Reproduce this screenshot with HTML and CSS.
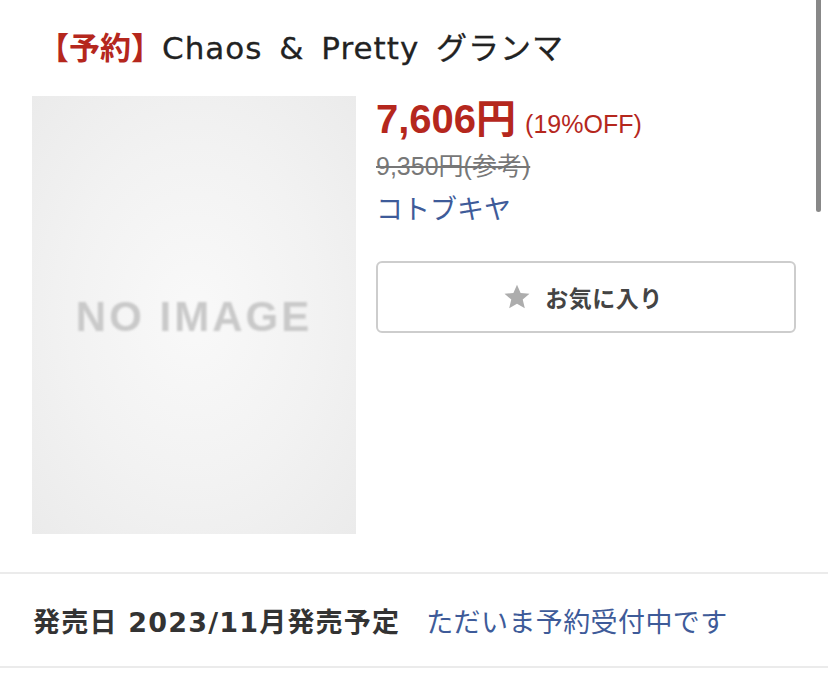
FILE: index.html
```html
<!DOCTYPE html>
<html lang="ja">
<head>
  <meta charset="UTF-8">
  <meta name="viewport" content="width=device-width, initial-scale=1.0">
  <title>【予約】Chaos &amp; Pretty グランマ</title>
  <link rel="stylesheet" href="styles.css">
</head>
<body>
  <div class="page">
    <h1 class="item-title"><span class="tag">【予約】</span>Chaos &amp; Pretty グランマ</h1>

    <div class="summary">
      <div class="thumb">
        <span class="no-image">NO IMAGE</span>
      </div>

      <div class="info">
        <div class="price">
          <span class="price-now">7,606円</span>
          <span class="price-off">(19%OFF)</span>
        </div>
        <div class="price-ref">9,350円(参考)</div>
        <a class="maker" href="#">コトブキヤ</a>

        <button class="btn-fav" type="button">
          <svg class="star" viewBox="0 0 24 24" width="28" height="28" aria-hidden="true">
            <path d="M12 1.5l3.1 7.1 7.6.6-5.8 5 1.8 7.5L12 17.7l-6.7 4 1.8-7.5-5.8-5 7.6-.6z" fill="#adadad"/>
          </svg>
          <span>お気に入り</span>
        </button>
      </div>
    </div>
  </div>

  <div class="release">
    <span class="release-date">発売日 2023/11月発売予定</span>
    <span class="release-status">ただいま予約受付中です</span>
  </div>

  <!-- scroll indicator -->
  <div class="scroll-bar"></div>
</body>
</html>
```

FILE: styles.css
```css
/* General Styles */
* {
  margin: 0;
  padding: 0;
  box-sizing: border-box;
}

body {
  font-family: "DejaVu Sans", "Noto Sans CJK JP", sans-serif;
  background-color: #fff;
  color: #222;
}

.page {
  padding: 0 32px;
}

.item-title {
  font-size: 31px;
  font-weight: 400;
  line-height: 42px;
  letter-spacing: 1px;
  word-spacing: 6px;
  padding: 27px 0 0 6px;
  color: #222;
  -webkit-text-stroke: 0.3px #222;
}

.item-title .tag {
  color: #b5271d;
  font-weight: 700;
  letter-spacing: 0;
  -webkit-text-stroke: 0;
}

.summary {
  display: flex;
  gap: 20px;
  margin-top: 27px;
}

.thumb {
  flex: 0 0 324px;
  height: 438px;
  background: radial-gradient(ellipse at 50% 50%, #f9f9f9 0%, #f2f2f2 55%, #ebebeb 100%);
  display: flex;
  align-items: center;
  justify-content: center;
}

.no-image {
  font-family: "Liberation Sans", Arial, sans-serif;
  font-weight: 700;
  font-size: 42px;
  letter-spacing: 3px;
  color: #c9c9c9;
  filter: blur(0.8px);
  margin-top: 3px;
}

.info {
  flex: 1;
  display: flex;
  flex-direction: column;
  align-items: flex-start;
}

.price {
  display: flex;
  align-items: baseline;
  gap: 9px;
  font-family: "Liberation Sans", "Noto Sans CJK JP", sans-serif;
  color: #b5271d;
  line-height: 46px;
}

.price-now {
  font-size: 40px;
  font-weight: 700;
}

.price-off {
  font-size: 25px;
}

.price-ref {
  font-family: "Liberation Sans", "Noto Sans CJK JP", sans-serif;
  font-size: 25px;
  line-height: 34px;
  color: #777;
  text-decoration: line-through;
  margin-top: 2px;
}

.maker {
  font-family: "Noto Sans CJK JP", sans-serif;
  font-size: 27px;
  line-height: 40px;
  color: #3e5b99;
  text-decoration: none;
  margin-top: 5px;
}

.btn-fav {
  margin-top: 33px;
  width: 100%;
  height: 72px;
  display: flex;
  align-items: center;
  justify-content: center;
  gap: 14px;
  background: #fff;
  border: 2px solid #cdcdcd;
  border-radius: 6px;
  font-family: "Noto Sans CJK JP", sans-serif;
  font-size: 23px;
  font-weight: 700;
  letter-spacing: 0.5px;
  color: #444;
  cursor: pointer;
}

.btn-fav .star {
  margin-left: -6px;
}

.release {
  margin-top: 38px;
  border-top: 2px solid #ebebeb;
  border-bottom: 2px solid #ebebeb;
  height: 96px;
  padding: 0 33px;
  display: flex;
  align-items: center;
  gap: 26px;
  font-size: 27px;
}

.release-date {
  font-weight: 700;
  letter-spacing: 1.2px;
  color: #333;
}

.release-status {
  font-family: "Noto Sans CJK JP", sans-serif;
  letter-spacing: 0.4px;
  color: #3e5b99;
}

.scroll-bar {
  position: fixed;
  top: 0;
  right: 7px;
  width: 5px;
  height: 212px;
  background: #888;
  border-radius: 0 0 3px 3px;
}
```
